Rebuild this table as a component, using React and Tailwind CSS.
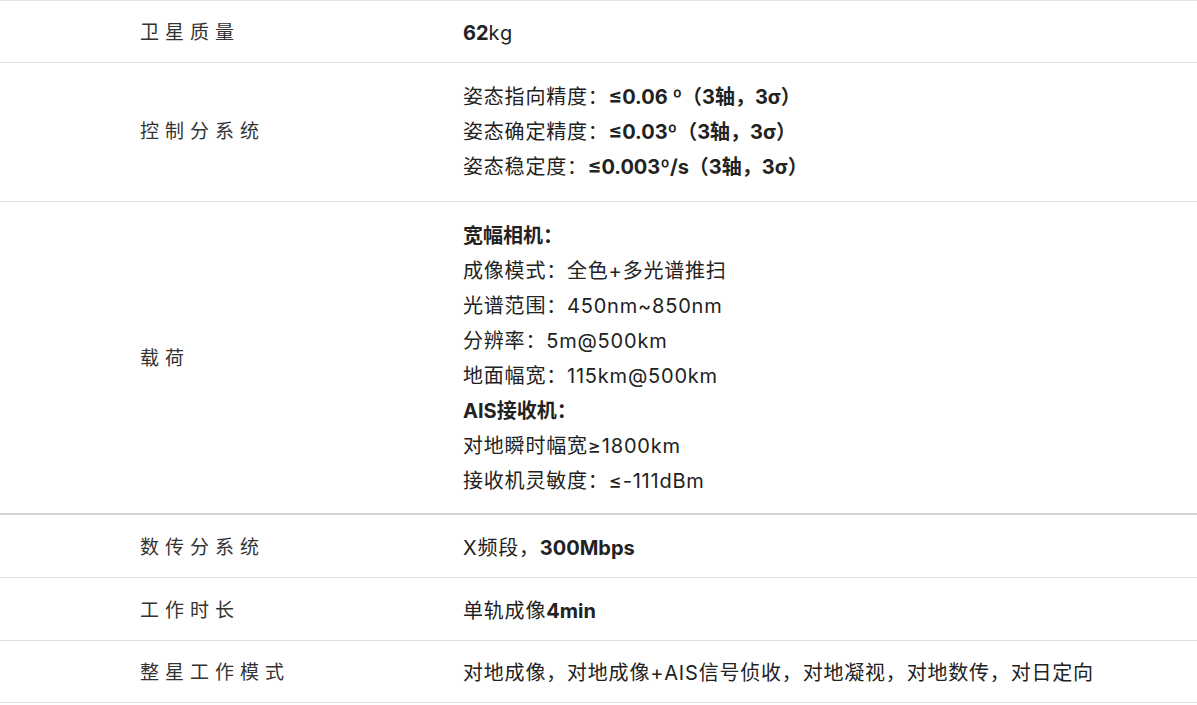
const B = ({ children }) => <b className="font-bold tracking-normal">{children}</b>;

const rows = [
  {
    label: '卫星质量',
    pad: 'pt-[15px] pb-[11px]',
    lines: [[<B key="a">62</B>, 'kg']],
  },
  {
    label: '控制分系统',
    pad: 'pt-[17px] pb-[16px]',
    lines: [
      ['姿态指向精度：', <B key="a">≤0.06 º（3轴，3σ）</B>],
      ['姿态确定精度：', <B key="a">≤0.03º（3轴，3σ）</B>],
      ['姿态稳定度：', <B key="a">≤0.003º/s（3轴，3σ）</B>],
    ],
  },
  {
    label: '载荷',
    pad: 'pt-[17px] pb-[14px]',
    thick: true,
    lines: [
      [<B key="a">宽幅相机：</B>],
      ['成像模式：全色+多光谱推扫'],
      ['光谱范围：450nm~850nm'],
      ['分辨率：5m@500km'],
      ['地面幅宽：115km@500km'],
      [<B key="a">AIS接收机：</B>],
      ['对地瞬时幅宽≥1800km'],
      ['接收机灵敏度：≤-111dBm'],
    ],
  },
  {
    label: '数传分系统',
    pad: 'pt-[16px] pb-[11px]',
    lines: [['X频段，', <B key="a">300Mbps</B>]],
  },
  {
    label: '工作时长',
    pad: 'pt-[16px] pb-[11px]',
    lines: [['单轨成像', <B key="a">4min</B>]],
  },
  {
    label: '整星工作模式',
    pad: 'pt-[15px] pb-[11px]',
    lines: [['对地成像，对地成像+AIS信号侦收，对地凝视，对地数传，对日定向']],
  },
];

export default function App() {
  return (
    <div
      className="w-full bg-white border-t border-[#e3e3e3]"
      style={{ fontFamily: "Inter, 'Noto Sans CJK SC', sans-serif" }}
    >
      {rows.map((row, i) => (
        <div
          key={i}
          className={`flex items-center ${row.pad} ${row.thick ? 'border-b-2 border-[#d6d6d6]' : 'border-b border-[#e0e0e0]'}`}
        >
          <div className="w-[463px] shrink-0 pl-[140px] text-[19px] tracking-[6px] text-[#333]">
            {row.label}
          </div>
          <div className="flex flex-col text-[20px] tracking-[0.8px] leading-[35px] text-[#222]">
            {row.lines.map((l, j) => (
              <div key={j}>{l}</div>
            ))}
          </div>
        </div>
      ))}
    </div>
  );
}
